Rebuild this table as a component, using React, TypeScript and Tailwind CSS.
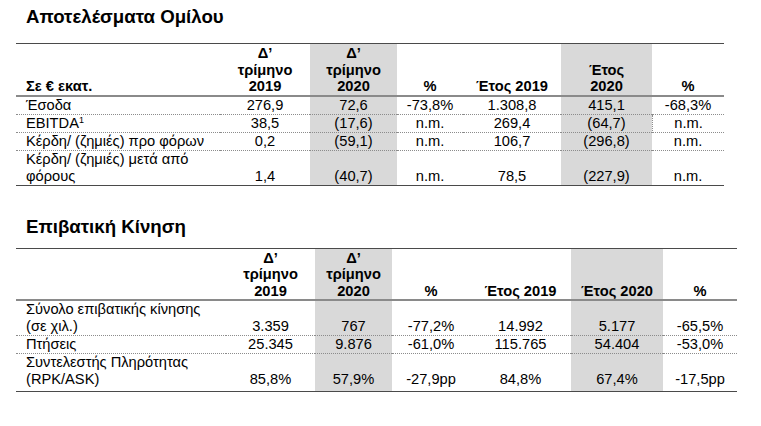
import clsx from 'clsx';
import type { ReactNode } from 'react';

type Row = { label: ReactNode; values: string[]; tall?: boolean; markLast?: boolean };

const groupRows: Row[] = [
  { label: 'Έσοδα', values: ['276,9', '72,6', '-73,8%', '1.308,8', '415,1', '-68,3%'] },
  {
    label: (
      <>
        EBITDA<sup className="text-[9px]">1</sup>
      </>
    ),
    values: ['38,5', '(17,6)', 'n.m.', '269,4', '(64,7)', 'n.m.'],
    markLast: true,
  },
  { label: 'Κέρδη/ (ζημιές) προ φόρων', values: ['0,2', '(59,1)', 'n.m.', '106,7', '(296,8)', 'n.m.'] },
  {
    label: (
      <>
        Κέρδη/ (ζημιές) μετά από
        <br />
        φόρους
      </>
    ),
    values: ['1,4', '(40,7)', 'n.m.', '78,5', '(227,9)', 'n.m.'],
    tall: true,
  },
];

const trafficRows: Row[] = [
  {
    label: (
      <>
        Σύνολο επιβατικής κίνησης
        <br />
        (σε χιλ.)
      </>
    ),
    values: ['3.359', '767', '-77,2%', '14.992', '5.177', '-65,5%'],
    tall: true,
  },
  { label: 'Πτήσεις', values: ['25.345', '9.876', '-61,0%', '115.765', '54.404', '-53,0%'] },
  {
    label: (
      <>
        Συντελεστής Πληρότητας
        <br />
        (RPK/ASK)
      </>
    ),
    values: ['85,8%', '57,9%', '-27,9pp', '84,8%', '67,4%', '-17,5pp'],
    tall: true,
  },
];

const quarter = (year: string) => (
  <>
    Δ’
    <br />
    τρίμηνο
    <br />
    {year}
  </>
);

function Cell({
  children,
  gray,
  left,
  className,
}: {
  children?: ReactNode;
  gray?: boolean;
  left?: boolean;
  className?: string;
}) {
  return (
    <div
      className={clsx(
        'flex flex-col justify-end',
        gray && 'bg-[#d9d9d9]',
        left ? 'pl-[10px] items-start text-left' : 'items-center text-center',
        className
      )}
    >
      <div>{children}</div>
    </div>
  );
}

function Table({
  cols,
  width,
  headers,
  rows,
  lastPad,
}: {
  cols: string;
  width: string;
  headers: ReactNode[];
  rows: Row[];
  lastPad?: boolean;
}) {
  return (
    <div className={clsx('ml-[16px] grid border-t border-b border-[#4a4a4a]', cols, width)}>
      {headers.map((h, i) => (
        <Cell
          key={`h${i}`}
          gray={i === 2 || i === 5}
          left={i === 0}
          className="pt-[1px] font-bold leading-[16.5px] border-b-2 border-[#8a8a8a]"
        >
          {h}
        </Cell>
      ))}
      {rows.map((row, r) => {
        const last = r === rows.length - 1;
        const rowCls = clsx(
          'leading-[17px]',
          !last && 'border-b border-dotted border-[#8c8c8c]',
          last && lastPad && 'pb-[3px]'
        );
        return [
          <Cell key={`l${r}`} left className={rowCls}>
            {row.label}
          </Cell>,
          ...row.values.map((v, i) => (
            <Cell
              key={`v${r}-${i}`}
              gray={i === 1 || i === 4}
              className={clsx(rowCls, row.markLast && i === 5 && 'border-l border-dotted')}
            >
              {v}
            </Cell>
          )),
        ];
      })}
    </div>
  );
}

export default function App() {
  return (
    <div className="w-[761px] h-[426px] bg-white text-black font-['Liberation_Sans',Arial,sans-serif] text-[14.67px] overflow-hidden">
      {/* Αποτελέσματα Ομίλου */}
      <h1 className="pt-[6px] pl-[26px] text-[18.67px] leading-[22px] font-bold">Αποτελέσματα Ομίλου</h1>
      <div className="mt-[15px]">
        <Table
          cols="grid-cols-[204px_90px_87px_66px_98px_91px_72px]"
          width="w-[708px]"
          headers={[
            'Σε € εκατ.',
            quarter('2019'),
            quarter('2020'),
            '%',
            'Έτος 2019',
            <>
              Έτος
              <br />
              2020
            </>,
            '%',
          ]}
          rows={groupRows}
        />
      </div>

      {/* Επιβατική Κίνηση */}
      <h2 className="mt-[30px] pl-[26px] text-[18.67px] leading-[22px] font-bold">Επιβατική Κίνηση</h2>
      <div className="mt-[10px]">
        <Table
          cols="grid-cols-[210px_89px_77px_78px_101px_92px_74px]"
          width="w-[721px]"
          headers={['', quarter('2019'), quarter('2020'), '%', 'Έτος 2019', 'Έτος 2020', '%']}
          rows={trafficRows}
          lastPad
        />
      </div>
    </div>
  );
}
